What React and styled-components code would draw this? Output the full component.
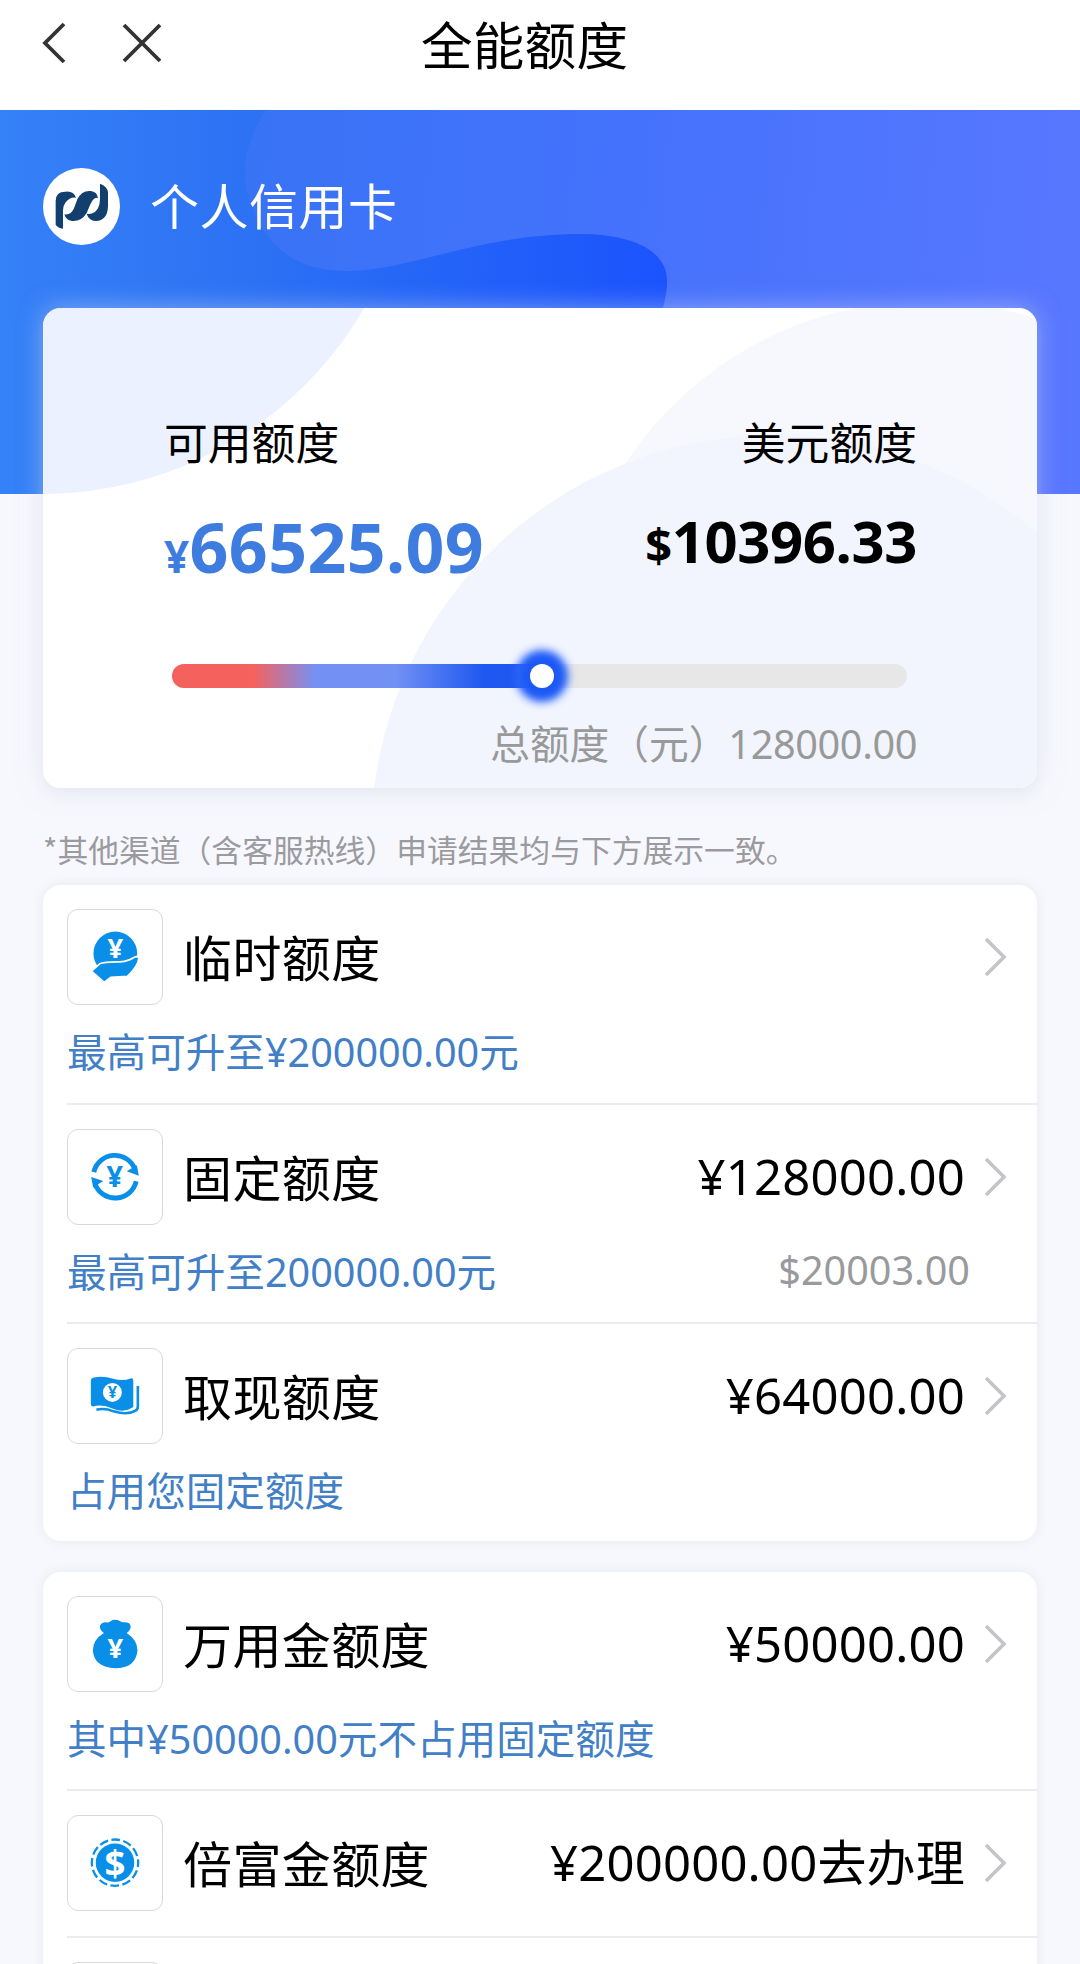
import styled, { createGlobalStyle } from 'styled-components';

const GlobalStyle = createGlobalStyle`
    * {
        box-sizing: border-box;
    }
    body {
        margin: 0;
        background-color: #f7f8fd;
        font-family: 'Noto Sans', 'Noto Sans CJK SC', sans-serif;
        color: #000000;
    }
`;

const Page = styled.div`
    width: 1080px;
    height: 1964px;
    overflow: hidden;
    display: flex;
    flex-direction: column;
    background-color: #f7f8fd;
`;

const Header = styled.header`
    flex: none;
    height: 110px;
    padding: 0 0 21px 42px;
    display: flex;
    align-items: center;
    background-color: #ffffff;
`;

const NavIcon = styled.svg`
    flex: none;
    width: ${(props) => props.$width}px;
    height: 42px;
    margin-right: ${(props) => props.$gap}px;
    margin-top: -3px;
    fill: none;
    stroke: #333333;
    stroke-width: 3.8;
`;

const Title = styled.h1`
    margin: 0;
    font-size: 51.5px;
    font-weight: 400;
    line-height: 60px;
    letter-spacing: 0.3px;
`;

const Hero = styled.section`
    flex: none;
    position: relative;
    height: 384px;
    padding: 57px 43px 0;
`;

const HeroWave = styled.svg`
    position: absolute;
    top: 0;
    left: 0;
    width: 1080px;
    height: 384px;
`;

const Owner = styled.div`
    position: relative;
    display: flex;
    align-items: center;
    gap: 30px;
    height: 78px;
    margin-bottom: 63px;
    color: #ffffff;
    font-size: 49px;
    line-height: 60px;
    letter-spacing: 0.5px;
`;

const BankLogo = styled.svg`
    width: 77px;
    height: 77px;
`;

const LimitCard = styled.section`
    position: relative;
    height: 480px;
    border-radius: 18px;
    overflow: hidden;
    padding: 105px 120px 0 121px;
    background-color: #ffffff;
`;

const CardGlow = styled.div`
    position: relative;
    border-radius: 18px;
    box-shadow: 0 0 24px rgba(222, 228, 246, 0.5), 0 6px 16px rgba(60, 64, 90, 0.06);
`;

const CardShapes = styled.svg`
    position: absolute;
    top: 0;
    left: 0;
    width: 994px;
    height: 480px;
`;

const Split = styled.div`
    position: relative;
    display: flex;
    justify-content: space-between;
    align-items: ${(props) => props.$align || 'center'};
`;

const LimitLabel = styled.span`
    font-size: 43.8px;
    line-height: 60px;
`;

const Balance = styled.div`
    height: 84px;
    line-height: 84px;
    margin-top: ${(props) => props.$top}px;
    font-size: ${(props) => props.$size}px;
    font-weight: 700;
    letter-spacing: ${(props) => props.$spacing}px;
    color: ${(props) => props.$color};
`;

const Currency = styled.small`
    font-size: ${(props) => props.$size}px;
`;

const Track = styled.div`
    position: relative;
    height: 24px;
    margin: 75px 10px 0 8px;
    border-radius: 12px;
    background-color: #e7e7e7;
`;

const Fill = styled.div`
    height: 24px;
    border-radius: 12px 0 0 12px;
    background: linear-gradient(90deg, #f5625d 0%, #f5625d 22%, #7391f5 39%, #7391f5 60%, #1f58ef 84%, #1c55f2 100%);
`;

const Thumb = styled.span`
    position: absolute;
    top: 0;
    width: 24px;
    height: 24px;
    margin-left: -12px;
    border-radius: 50%;
    background-color: #ffffff;
    box-shadow: 0 0 9px 12px #1c58f5, 0 0 12px 12px #4a80fa;
`;

const Total = styled.p`
    position: relative;
    margin: 26px 0 0;
    color: #999999;
    font-size: 39.7px;
    line-height: 60px;
    text-align: right;
`;

const TotalValue = styled.span`
    letter-spacing: -0.4px;
`;

const Notice = styled.p`
    margin: 0;
    padding: 324px 43px 0;
    height: 391px;
    flex: none;
    font-family: 'Noto Sans CJK SC', sans-serif;
    font-size: 30.8px;
    line-height: 62px;
    color: #9b9b9f;
`;

const List = styled.section`
    flex: none;
    margin: 0 43px 31px;
    padding-left: 24px;
    border-radius: 18px;
    background-color: #ffffff;
    box-shadow: 0 0 12px rgba(60, 64, 90, 0.08);
`;

const Item = styled.article`
    height: ${(props) => props.$height}px;
    padding: 24px 29px 0 0;
    border-bottom: ${(props) => (props.$last ? 'none' : '2px solid #ebebeb')};
`;

const ItemHead = styled.div`
    display: flex;
    align-items: center;
    height: 96px;
`;

const IconBox = styled.svg`
    flex: none;
    width: 96px;
    height: 96px;
    border: 1px solid #d9d9db;
    border-radius: 11px;
    margin-right: 20px;
`;

const IconText = styled.text`
    font-family: 'Noto Sans', sans-serif;
    font-weight: 700;
    text-anchor: middle;
`;

const ItemTitle = styled.h2`
    flex: 1;
    margin: 1px 0 0;
    font-size: 49px;
    font-weight: 400;
    line-height: 60px;
    letter-spacing: 0.4px;
`;

const Amount = styled.span`
    margin: -2px 19px 0 0;
    font-size: 49px;
    line-height: 60px;
    letter-spacing: 0.2px;
`;

const Chevron = styled.svg`
    width: 24px;
    height: 40px;
    fill: none;
    stroke: #c4c5c9;
    stroke-width: 3.6;
`;

const ItemFoot = styled.div`
    display: flex;
    justify-content: space-between;
    margin-top: 17px;
    padding-right: 38px;
    font-size: 39.6px;
    line-height: 60px;
    color: #427fc6;
`;

const Dollars = styled.span`
    margin-top: -2px;
    color: #999a9d;
`;

const BLUE = '#0a8fe8';

const HandCoin = () => (
    <>
        <circle cx="145" cy="133" r="67" fill={BLUE} />
        <path
            d="M72 187 L97 165 Q112 158 160 159 Q186 156 199 147 Q214 139 217 147 Q216 170 182 203 L131 206 L111 222 Z"
            fill={BLUE} stroke="#ffffff" strokeWidth="5"
        />
        <IconText x="145" y="146" fontSize="84" fill="#ffffff">¥</IconText>
    </>
);

const Cycle = () => (
    <>
        <g fill="none" stroke={BLUE} strokeWidth="15">
            <path d="M79 129 A66 66 0 0 1 205 120" />
            <path d="M209 157 A66 66 0 0 1 83 166" />
        </g>
        <path d="M180 126 L217 140 L211 108 Z M108 156 L71 144 L77 176 Z" fill={BLUE} />
        <IconText x="143" y="175" fontSize="88" fill={BLUE}>¥</IconText>
    </>
);

const Banknote = () => (
    <>
        <path
            d="M70 97 Q70 89 79 87 Q110 82 138 91 Q168 100 192 90 Q200 88 200 96 V178 Q172 197 138 183 Q105 168 77 176 Q70 177 70 168 Z"
            fill={BLUE}
        />
        <path d="M87 186 Q112 180 140 191 Q182 204 207 189 Q214 185 214 176 V113" fill="none" stroke={BLUE} strokeWidth="8" />
        <circle cx="136" cy="133" r="29" fill="#ffffff" />
        <IconText x="136" y="151" fontSize="50" fill={BLUE}>¥</IconText>
    </>
);

const MoneyBag = () => (
    <>
        <path
            d="M110 110 Q96 100 98 88 Q104 76 120 78 Q126 78 130 74 Q144 65 160 74 Q166 79 174 77 Q191 77 192 90 Q192 101 180 110 Q213 132 213 163 Q208 218 145 218 Q80 216 76 163 Q77 130 110 110 Z"
            fill={BLUE}
        />
        <IconText x="145" y="187" fontSize="84" fill="#ffffff">¥</IconText>
    </>
);

const DollarCoin = () => (
    <>
        <circle cx="144" cy="143" r="59" fill={BLUE} />
        <circle cx="144" cy="143" r="71" fill="none" stroke={BLUE} strokeWidth="7" strokeDasharray="27 10.17" strokeDashoffset="13.5" />
        <IconText x="144" y="183" fontSize="112" fill="#ffffff">$</IconText>
    </>
);

const LimitItem = ({ icon, title, amount, hint, dollars, height = 219, last }) => (
    <Item $height={height} $last={last}>
        <ItemHead>
            <IconBox viewBox="0 0 288 288">{icon}</IconBox>
            <ItemTitle>{title}</ItemTitle>
            {amount && <Amount>{amount}</Amount>}
            <Chevron viewBox="0 0 24 40">
                <path d="M2 2 L20 20 L2 38" />
            </Chevron>
        </ItemHead>
        {hint && (
            <ItemFoot>
                <span>{hint}</span>
                {dollars && <Dollars>{dollars}</Dollars>}
            </ItemFoot>
        )}
    </Item>
);

const App = () => {
    const used = 50.4;

    return (
        <Page>
            <GlobalStyle />
            <Header>
                <NavIcon viewBox="0 0 24 42" $width={24} $gap={56}>
                    <path d="M22 2 L3 21 L22 40" />
                </NavIcon>
                <NavIcon viewBox="0 0 42 42" $width={42} $gap={257}>
                    <path d="M2 3 L38 39 M38 3 L2 39" />
                </NavIcon>
                <Title>全能额度</Title>
            </Header>

            <Hero>
                <HeroWave viewBox="0 0 1080 384" preserveAspectRatio="none">
                    <defs>
                        <linearGradient id="heroBase" gradientUnits="userSpaceOnUse" x1="0" y1="0" x2="670" y2="0">
                            <stop offset="0" stopColor="#3581f7" />
                            <stop offset="0.4" stopColor="#2c70f4" />
                            <stop offset="1" stopColor="#1b53fd" />
                        </linearGradient>
                        <linearGradient id="heroBlob" gradientUnits="userSpaceOnUse" x1="240" y1="0" x2="1080" y2="80">
                            <stop offset="0" stopColor="#3873f5" />
                            <stop offset="0.45" stopColor="#4472fc" />
                            <stop offset="1" stopColor="#5877ff" />
                        </linearGradient>
                    </defs>
                    <rect width="1080" height="384" fill="url(#heroBase)" />
                    <path
                        d="M266 0 C240 40 238 78 262 118 C284 152 312 161 350 161 C410 160 480 124 580 124 C635 124 668 142 667 172 C667 184 664 192 662 204 V384 H1080 V0 Z"
                        fill="url(#heroBlob)"
                    />
                </HeroWave>
                <Owner>
                    <BankLogo viewBox="39 53 231 231">
                        <circle cx="154.5" cy="168.5" r="115.5" fill="#ffffff" />
                        <g fill="#123f6d">
                            <path d="M77 223 V152 Q77 123 108 124 Q131 122 138 142 Q120 139 107 156 Q99 166 99 180 V235 Q84 233 77 223 Z" />
                            <path d="M103 192 Q122 196 132 174 L142 147 Q155 120 182 122 Q201 124 204 143 Q191 139 181 162 L170 188 Q154 214 126 212 Q108 210 103 192 Z" />
                            <path d="M170 190 Q191 195 204 174 Q210 162 210 145 V100 Q232 108 234 126 V168 Q232 212 197 212 Q176 210 170 190 Z" />
                        </g>
                    </BankLogo>
                    <span>个人信用卡</span>
                </Owner>
                <CardGlow>
                    <LimitCard>
                        <CardShapes viewBox="43 308 994 480">
                            <circle cx="42" cy="122" r="372" fill="#ebf1fe" />
                            <circle cx="926" cy="660" r="359" fill="#f6f8fe" />
                            <circle cx="774" cy="838" r="403" fill="#f2f5fe" />
                        </CardShapes>
                        <Split>
                            <LimitLabel>可用额度</LimitLabel>
                            <LimitLabel>美元额度</LimitLabel>
                        </Split>
                        <Split $align="flex-start">
                            <Balance $size={68} $color="#3f7ce0" $spacing={0.4} $top={32}>
                                <Currency $size={44}>¥</Currency>66525.09
                            </Balance>
                            <Balance $size={58} $color="#000000" $spacing={-0.4} $top={26}>
                                <Currency $size={47}>$</Currency>10396.33
                            </Balance>
                        </Split>
                        <Track>
                            <Fill style={{ width: `${used}%` }} />
                            <Thumb style={{ left: `${used}%` }} />
                        </Track>
                        <Total>总额度（元）<TotalValue>128000.00</TotalValue></Total>
                    </LimitCard>
                </CardGlow>
            </Hero>

            <Notice>*其他渠道（含客服热线）申请结果均与下方展示一致。</Notice>

            <List>
                <LimitItem icon={<HandCoin />} title="临时额度" hint="最高可升至¥200000.00元" height={220} />
                <LimitItem icon={<Cycle />} title="固定额度" amount="¥128000.00" hint="最高可升至200000.00元" dollars="$20003.00" />
                <LimitItem icon={<Banknote />} title="取现额度" amount="¥64000.00" hint="占用您固定额度" height={217} last />
            </List>

            <List>
                <LimitItem icon={<MoneyBag />} title="万用金额度" amount="¥50000.00" hint="其中¥50000.00元不占用固定额度" />
                <LimitItem icon={<DollarCoin />} title="倍富金额度" amount="¥200000.00去办理" height={147} />
                <LimitItem title="" last />
            </List>
        </Page>
    );
};

export default App;
